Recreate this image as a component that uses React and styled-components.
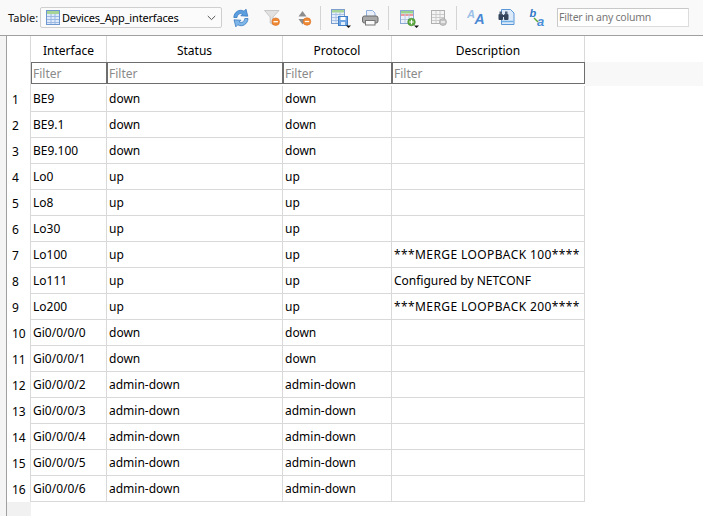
import React from "react";
import styled, { createGlobalStyle } from "styled-components";

const Global = createGlobalStyle`
  html, body { margin: 0; padding: 0; background: #fff; }
  body { font-family: "Noto Sans", "Liberation Sans", sans-serif; font-size: 12px; color: #000; }
  #root { width: 703px; height: 516px; overflow: hidden; }
`;

const Page = styled.div`
  width: 703px;
  height: 516px;
  display: flex;
  flex-direction: column;
  background: #f9f9f9;
`;
const Toolbar = styled.div`
  flex: none;
  display: flex;
  align-items: center;
  padding-left: 8px;
  box-sizing: border-box;
  border-bottom: 1px solid #a0a0a0;
  height: 36px;
`;
const Label = styled.span`
  font-size: 11px;
  width: 32px;
  flex: none;
  color: #111;
`;
const Combo = styled.div`
  width: 182px;
  height: 21px;
  box-sizing: border-box;
  border: 1px solid #cfcfcf;
  border-radius: 2px;
  background: #fbfbfb;
  display: flex;
  align-items: center;
  padding-left: 5px;
  gap: 2px;
  font-size: 11px;
  letter-spacing: -0.18px;
  margin-right: 11px;
  flex: none;
`;
const ComboText = styled.span`
  flex: 1;
  white-space: nowrap;
`;
const Chevron = styled.svg`
  width: 9px;
  height: 6px;
  margin-right: 5px;
`;
const ToolIcon = styled.svg`
  width: ${(p) => p.$w || 18}px;
  height: 20px;
  flex: none;
  margin-right: ${(p) => p.$gap || 0}px;
  display: block;
`;
const Sep = styled.div`
  width: 1px;
  height: 24px;
  background: #d4d4d4;
  flex: none;
  margin-right: ${(p) => p.$gap}px;
`;
const Search = styled.div`
  width: 132px;
  height: 19px;
  box-sizing: border-box;
  border: 1px solid #dcdcdc;
  border-left-color: #c8c8c8;
  border-top-color: #c8c8c8;
  background: #fff;
  color: #777;
  font-size: 10.5px;
  letter-spacing: -0.25px;
  line-height: 16px;
  padding-left: 1px;
  flex: none;
  white-space: nowrap;
`;
const Body = styled.div`
  flex: 1;
  display: flex;
  min-height: 0;
`;
const Gutter = styled.div`
  width: 6px;
  flex: none;
  background: #f4f4f4;
  border-right: 1px solid #a0a0a0;
`;
const Sheet = styled.div`
  flex: 1;
  background: #fff;
  display: grid;
  grid-template-columns: 24px 76px 176px 109px 193px 1fr;
  grid-template-rows: 26px 24px repeat(16, 26px) 1fr;
`;
const Corner = styled.div`
  background: #fff;
  border-right: 1px solid #d9d9d9;
`;
const Head = styled.div`
  border-right: 1px solid #d9d9d9;
  display: flex;
  align-items: center;
  justify-content: center;
  font-size: 12px;
  padding-top: 3px;
  box-sizing: border-box;
`;
const Blank = styled.div`
  background: ${(p) => p.$bg || "#fff"};
`;
const FilterWrap = styled.div`
  background: #fff;
  min-width: 0;
`;
const FilterCell = styled.div`
  height: 22px;
  border: 1px solid #6e6e6e;
  border-left-width: ${(p) => (p.$first ? 1 : 2)}px;
  margin-left: ${(p) => (p.$first ? 0 : -1)}px;
  background: #fff;
  color: #8a8a8a;
  font-size: 12px;
  display: flex;
  align-items: center;
  padding-left: 1px;
  box-sizing: border-box;
`;
const RowNo = styled.div`
  background: #fff;
  border-right: 1px solid #d9d9d9;
  display: flex;
  align-items: center;
  padding: 1px 0 0 5px;
  box-sizing: border-box;
  font-size: 12px;
`;
const Cell = styled.div`
  border-right: 1px solid #d9d9d9;
  border-bottom: 1px solid #d9d9d9;
  display: flex;
  align-items: center;
  padding: 0 0 0 2px;
  box-sizing: border-box;
  font-size: 12px;
  letter-spacing: ${(p) => (p.$wide ? "0.4px" : "0")};
  white-space: nowrap;
  overflow: hidden;
  background: #fff;
`;
const Foot = styled.div`
  background: #f1f1f1;
`;

const rows = [
  ["BE9", "down", "down", ""],
  ["BE9.1", "down", "down", ""],
  ["BE9.100", "down", "down", ""],
  ["Lo0", "up", "up", ""],
  ["Lo8", "up", "up", ""],
  ["Lo30", "up", "up", ""],
  ["Lo100", "up", "up", "***MERGE LOOPBACK 100****"],
  ["Lo111", "up", "up", "Configured by NETCONF"],
  ["Lo200", "up", "up", "***MERGE LOOPBACK 200****"],
  ["Gi0/0/0/0", "down", "down", ""],
  ["Gi0/0/0/1", "down", "down", ""],
  ["Gi0/0/0/2", "admin-down", "admin-down", ""],
  ["Gi0/0/0/3", "admin-down", "admin-down", ""],
  ["Gi0/0/0/4", "admin-down", "admin-down", ""],
  ["Gi0/0/0/5", "admin-down", "admin-down", ""],
  ["Gi0/0/0/6", "admin-down", "admin-down", ""],
];

const MinusBadge = ({ cx, cy }) => (
  <g>
    <circle cx={cx} cy={cy} r="3.8" fill="#ee8a35" stroke="#dd6d20" strokeWidth="0.6" />
    <path d={`M${cx - 2.2} ${cy}h4.4`} stroke="#fff" strokeWidth="1.3" />
  </g>
);

const App = () => (
  <Page>
    <Global />
    <Toolbar>
      <Label>Table:</Label>
      <Combo>
        <svg width="14" height="15" viewBox="0 0 14 15" style={{ flex: "none" }}>
          <rect x="0.5" y="0.5" width="13" height="14" fill="#dfeafa" stroke="#6f97cf" />
          <rect x="1" y="1" width="12" height="3" fill="#a6d496" />
          <path d="M1 6.5h12M1 9.5h12M1 12.5h12M5 4v10M9 4v10" stroke="#9bb9e2" />
        </svg>
        <ComboText>Devices_App_interfaces</ComboText>
        <Chevron viewBox="0 0 9 6">
          <path d="M0.8 1l3.7 3.6L8.2 1" fill="none" stroke="#555" strokeWidth="1" />
        </Chevron>
      </Combo>

      <ToolIcon $w={16} $gap={15} viewBox="0 0 16 20">
        <path d="M0.8 9.500C1 4 6.500 0.500 11 3.200L13 1.200 14.800 8.200 7.800 7.800 9.600 6C7 4.800 4.500 6.200 4 9.500Z" fill="#5b9fe0" stroke="#2a6fb8" strokeWidth="0.7" />
        <path d="M15 10.500C14.800 16 9.300 19.500 4.800 16.800L2.800 18.800 1 11.800 8 12.200 6.200 14C8.800 15.200 11.300 13.800 11.800 10.500Z" fill="#7fb6ea" stroke="#2a6fb8" strokeWidth="0.7" />
      </ToolIcon>
      <ToolIcon $w={16} $gap={18} viewBox="0 0 16 20">
        <path d="M0.500 2.500h14.500L9 9v7.500l-2.800-1.500V9Z" fill="#e2e2e2" stroke="#bcbcbc" strokeWidth="0.8" />
        <MinusBadge cx="11.700" cy="13.700" />
      </ToolIcon>
      <ToolIcon $w={16} $gap={6} viewBox="0 0 16 20">
        <path d="M0.500 8.500L4.500 3 8.500 8.500Z" fill="#8d8d8d" />
        <path d="M0.500 11L4.500 16.500 8.500 11Z" fill="#8d8d8d" />
        <MinusBadge cx="9" cy="13.500" />
      </ToolIcon>
      <Sep $gap={10} />
      <ToolIcon $w={20} $gap={11} viewBox="0 0 20 20">
        <rect x="0.500" y="1.500" width="13" height="14" fill="#e6effa" stroke="#7c9fd0" />
        <rect x="1" y="2" width="12" height="2.500" fill="#a6d496" />
        <path d="M1 6.500h12M1 9.500h12M1 12.500h12M5 4.500v10M9 4.500v10" stroke="#a9c2e6" />
        <rect x="7.500" y="8.500" width="9" height="9" fill="#6ea4e2" stroke="#3f7dc6" />
        <rect x="9.500" y="9" width="5" height="3" fill="#fff" />
        <rect x="10" y="14" width="4" height="3" fill="#e3eefb" />
        <path d="M15 17.500h5L17.500 20Z" fill="#111" />
      </ToolIcon>
      <ToolIcon $w={17} $gap={9} viewBox="0 0 17 20">
        <path d="M4.500 2.500h6l2.500 2.500v4H4.500Z" fill="#e9f0fa" stroke="#8fb0dc" />
        <rect x="0.500" y="8" width="15.500" height="7" rx="2" fill="#a9a9a9" stroke="#6b6b6b" />
        <rect x="3.500" y="12.500" width="9.500" height="4.500" fill="#fafafa" stroke="#767676" />
      </ToolIcon>
      <Sep $gap={11} />
      <ToolIcon $w={19} $gap={12} viewBox="0 0 19 20">
        <rect x="0.500" y="2.500" width="13" height="13" fill="#eef3fb" stroke="#8aa9d6" />
        <rect x="1" y="3" width="12" height="2.500" fill="#9ad48a" />
        <path d="M1 7h12" stroke="#ef9a9a" strokeWidth="2" />
        <path d="M1 11.500h12M5 5.500v9.500M9 5.500v9.500" stroke="#b8c9e4" />
        <circle cx="11.500" cy="14" r="3.800" fill="#5aa83e" stroke="#3f8a2a" strokeWidth="0.6" />
        <path d="M9.300 14h4.400M11.500 11.800v4.400" stroke="#fff" strokeWidth="1.200" />
        <path d="M14 17.500h5L16.500 20Z" fill="#111" />
      </ToolIcon>
      <ToolIcon $w={18} $gap={7} viewBox="0 0 18 20">
        <rect x="0.500" y="2.500" width="13" height="13" fill="#f4f4f4" stroke="#b0b0b0" />
        <path d="M1 6.500h12M1 9.500h12M1 12.500h12M5 3v12M9 3v12" stroke="#cbcbcb" />
        <circle cx="12" cy="14" r="3.500" fill="#c4c4c4" stroke="#a0a0a0" strokeWidth="0.6" />
        <path d="M10 14h4" stroke="#fff" strokeWidth="1.200" />
      </ToolIcon>
      <Sep $gap={10} />
      <ToolIcon $w={18} $gap={13} viewBox="0 0 18 20">
        <text x="0" y="10" fontFamily="Liberation Sans" fontSize="11" fontWeight="700" fontStyle="italic" fill="#9cbfe8">A</text>
        <text x="7.500" y="16" fontFamily="Liberation Sans" fontSize="14" fontWeight="700" fontStyle="italic" fill="#4a88d4">A</text>
      </ToolIcon>
      <ToolIcon $w={18} $gap={13} viewBox="0 0 18 20">
        <path d="M3.500 1.500h9l3.500 3.500v11.500H3.500Z" fill="#dbe9f8" stroke="#5a97d6" />
        <path d="M4 13.500h11.500" stroke="#6fb0e6" strokeWidth="1.500" />
        <rect x="0.500" y="6" width="4.500" height="6" rx="1" fill="#33445a" />
        <rect x="6" y="6" width="4.500" height="6" rx="1" fill="#33445a" />
        <rect x="1.500" y="3.500" width="2.500" height="3" fill="#4f5f75" />
        <rect x="7" y="3.500" width="2.500" height="3" fill="#4f5f75" />
        <rect x="4.500" y="7" width="2" height="2" fill="#33445a" />
      </ToolIcon>
      <ToolIcon $w={18} $gap={10} viewBox="0 0 18 20">
        <text x="0.500" y="9" fontFamily="Liberation Sans" fontSize="11" fontWeight="700" fontStyle="italic" fill="#2f78c8">b</text>
        <text x="8" y="17.500" fontFamily="Liberation Sans" fontSize="13" fontWeight="700" fontStyle="italic" fill="#4a8fd8">a</text>
        <path d="M5 10l4 4" stroke="#5aa83e" strokeWidth="1.500" />
      </ToolIcon>
      <Search>Filter in any column</Search>
    </Toolbar>
    <Body>
      <Gutter />
      <Sheet>
        <Corner />
        {["Interface", "Status", "Protocol", "Description"].map((h) => (
          <Head key={h}>{h}</Head>
        ))}
        <Blank />
        <Corner />
        {[0, 1, 2, 3].map((i) => (
          <FilterWrap key={i}>
            <FilterCell $first={i === 0}>Filter</FilterCell>
          </FilterWrap>
        ))}
        <Blank $bg="#f8f8f8" />
        {rows.map((r, i) => (
          <React.Fragment key={i}>
            <RowNo>{i + 1}</RowNo>
            {r.map((c, j) => (
              <Cell key={j} $wide={c.startsWith("***")}>{c}</Cell>
            ))}
            <Blank />
          </React.Fragment>
        ))}
        <Foot />
        <Blank />
      </Sheet>
    </Body>
  </Page>
);

export default App;
